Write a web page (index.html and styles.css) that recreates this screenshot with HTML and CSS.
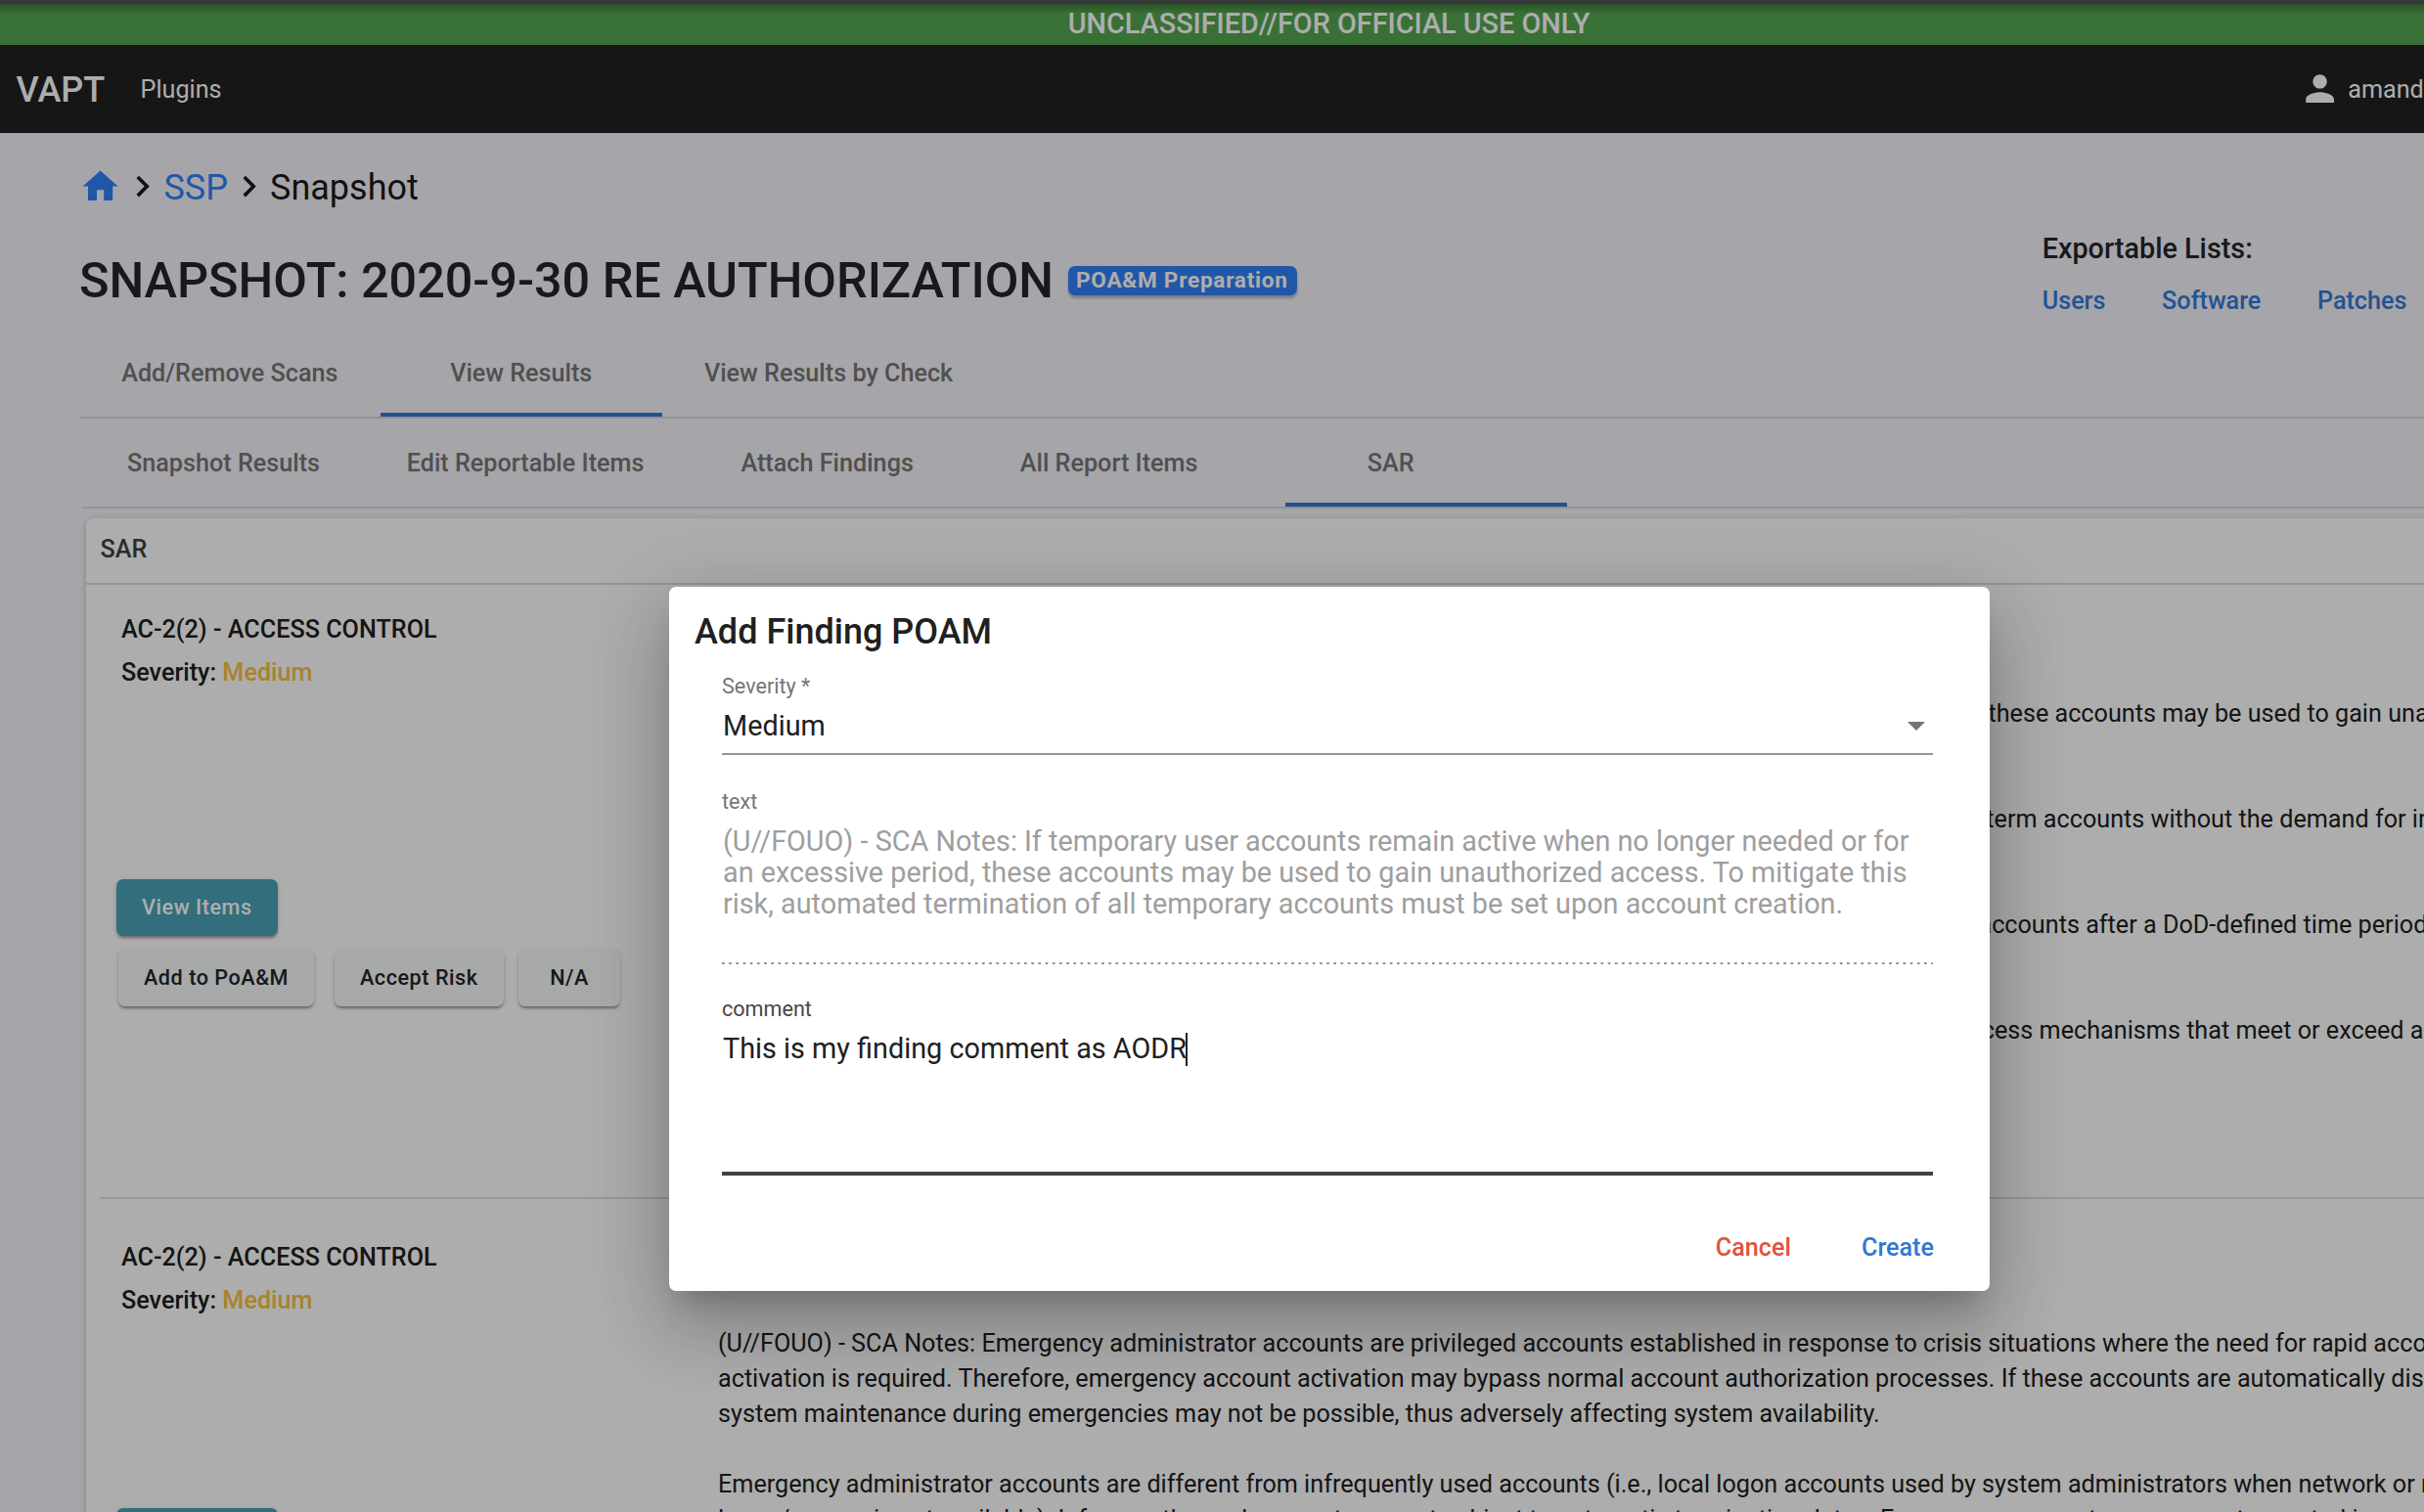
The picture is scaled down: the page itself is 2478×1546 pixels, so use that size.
FILE: index.html
```html
<!DOCTYPE html>
<html lang="en">
<head>
<meta charset="utf-8">
<title>VAPT - Snapshot</title>
<link rel="stylesheet" href="styles.css">
</head>
<body>
<div class="app">
  <div class="banner">UNCLASSIFIED//FOR OFFICIAL USE ONLY</div>
  <nav class="navbar">
    <span class="brand">VAPT</span>
    <a class="nav-link">Plugins</a>
    <div class="user">
      <svg class="icon" viewBox="0 0 24 24"><path d="M12 12c2.21 0 4-1.79 4-4s-1.79-4-4-4-4 1.790-4 4 1.790 4 4 4zm0 2c-2.670 0-8 1.340-8 4v2h16v-2c0-2.660-5.330-4-8-4z"/></svg>
      <span>amanda</span>
    </div>
  </nav>

  <main class="content">
    <div class="breadcrumb">
      <svg class="icon crumb-link" viewBox="0 0 24 24"><path d="M10 20v-6h4v6h5v-8h3L12 3 2 12h3v8z"/></svg>
      <svg class="icon" viewBox="0 0 24 24"><path d="M10 6L8.590 7.410 13.170 12l-4.580 4.590L10 18l6-6z"/></svg>
      <a class="crumb-link">SSP</a>
      <svg class="icon" viewBox="0 0 24 24"><path d="M10 6L8.590 7.410 13.170 12l-4.580 4.590L10 18l6-6z"/></svg>
      <span>Snapshot</span>
    </div>

    <header class="page-head">
      <div class="title-row">
        <h1>SNAPSHOT: 2020-9-30 RE AUTHORIZATION</h1>
        <span class="badge">POA&amp;M Preparation</span>
      </div>
      <div class="exports">
        <h2>Exportable Lists:</h2>
        <div class="export-links"><a>Users</a><a>Software</a><a>Patches</a></div>
      </div>
    </header>

    <div class="tabs">
      <div class="tab">Add/Remove Scans</div>
      <div class="tab active">View Results</div>
      <div class="tab">View Results by Check</div>
    </div>
    <div class="tabs sub-tabs">
      <div class="tab">Snapshot Results</div>
      <div class="tab">Edit Reportable Items</div>
      <div class="tab">Attach Findings</div>
      <div class="tab">All Report Items</div>
      <div class="tab active shifted">SAR</div>
    </div>

    <section class="card">
      <div class="card-head">SAR</div>
      <article class="finding">
        <div class="finding-side">
          <div class="control">AC-2(2) - ACCESS CONTROL</div>
          <div class="severity">Severity: <span class="medium">Medium</span></div>
          <div class="actions">
            <div class="action-row"><button class="btn btn-info">View Items</button></div>
            <div class="action-row sub"><button class="btn">Add to PoA&amp;M</button><button class="btn accept">Accept Risk</button><button class="btn na">N/A</button></div>
          </div>
        </div>
        <div class="finding-text">(U//FOUO) - SCA Notes: If temporary user accounts remain active when no longer needed or for an excessive period, these accounts may be used to gain unauthorized
access. To mitigate this risk, automated termination of all temporary accounts must be set upon account creation.

Temporary accounts are established as part of normal account activation procedures when there is a need for short-term accounts without the demand for immediacy
in account activation.

If temporary accounts are used, the operating system must be configured to automatically terminate these types of accounts after a DoD-defined time period of
72 hours.

To address access requirements, many operating systems may be integrated with enterprise-level authentication/access mechanisms that meet or exceed access
control policy requirements.</div>
      </article>
      <article class="finding">
        <div class="finding-side">
          <div class="control">AC-2(2) - ACCESS CONTROL</div>
          <div class="severity">Severity: <span class="medium">Medium</span></div>
          <div class="actions">
            <div class="action-row"><button class="btn btn-info">View Items</button></div>
          </div>
        </div>
        <div class="finding-text">(U//FOUO) - SCA Notes: Emergency administrator accounts are privileged accounts established in response to crisis situations where the need for rapid account
activation is required. Therefore, emergency account activation may bypass normal account authorization processes. If these accounts are automatically disabled,
system maintenance during emergencies may not be possible, thus adversely affecting system availability.

Emergency administrator accounts are different from infrequently used accounts (i.e., local logon accounts used by system administrators when network or normal
logon/access is not available). Infrequently used accounts are not subject to automatic termination dates. Emergency accounts are accounts created in response</div>
      </article>
    </section>
  </main>

  <div class="backdrop">
    <div class="dialog">
      <h2 class="dialog-title">Add Finding POAM</h2>
      <div class="field select">
        <div class="label">Severity *</div>
        <div class="value">Medium<svg class="arrow" viewBox="0 0 10 5"><path d="M0 0h10L5 5z"/></svg></div>
      </div>
      <div class="field disabled">
        <div class="label">text</div>
        <div class="value">(U//FOUO) - SCA Notes: If temporary user accounts remain active when no longer needed or for
an excessive period, these accounts may be used to gain unauthorized access. To mitigate this
risk, automated termination of all temporary accounts must be set upon account creation.</div>
      </div>
      <div class="field focused">
        <div class="label">comment</div>
        <div class="value">This is my finding comment as AODR<span class="caret"></span></div>
      </div>
      <div class="dialog-actions"><a class="cancel">Cancel</a><a class="create">Create</a></div>
    </div>
  </div>
  <div class="browser-edge"></div>
</div>
</body>
</html>
```
FILE: styles.css
```css
* { box-sizing: border-box; }

body {
  margin: 0;
  height: 1546px;
  overflow: hidden;
  font-family: Roboto, "Liberation Sans", sans-serif;
  font-size: 25.2px;
  line-height: 36px;
  color: #202020;
}

h1, h2 { margin: 0; font-weight: 500; }

/* The app is laid out wider than the window and runs off its right side. */
.app {
  position: relative;
  width: 2718px;
  height: 1546px;
  overflow: hidden;
  background: #f5f4fa;
}

.icon { width: 43.2px; height: 43.2px; fill: currentColor; flex: none; }

.banner {
  display: flex;
  justify-content: center;
  align-items: center;
  height: 46px;
  padding: 1px 1px 0 0;
  background: #54a550;
  color: #fff;
  font-size: 28.8px;
  font-weight: 500;
}

.navbar {
  display: flex;
  align-items: center;
  height: 90px;
  padding-left: 16.5px;
  background: #212121;
  color: #fff;
}
.brand { width: 127px; padding-top: 1px; font-size: 36px; font-weight: 500; }
.nav-link { width: 82px; }
.user { display: flex; align-items: center; gap: 7px; margin-left: 2124.5px; }
.nav-link, .user span { padding-top: 2px; }

.content { padding: 33px 0 0 81px; }

.breadcrumb {
  display: flex;
  align-items: center;
  height: 44px;
  font-size: 36px;
  color: #1a1a1a;
}
.breadcrumb a, .breadcrumb span { padding-top: 2px; }
.crumb-link { color: #3080f8; }

.page-head { display: flex; height: 127px; }
.title-row { display: flex; align-items: flex-start; width: 2006.7px; padding-top: 44px; }
h1 {
  color: #24262c;
  font-size: 50.4px;
  letter-spacing: -.06px;
  line-height: 60px;
  white-space: nowrap;
}
.badge {
  width: 234px;
  height: 30px;
  margin: 15px 0 0 15px;
  padding-left: 8px;
  border-radius: 7px;
  background: #3080f8;
  color: #fff;
  font-size: 22.6px;
  font-weight: 700;
  letter-spacing: .75px;
  line-height: 29px;
  white-space: nowrap;
  box-shadow: 0 3px 3px rgba(0, 0, 0, .25);
}
.exports { padding-top: 23px; }
.exports h2 { color: #24262c; font-size: 28.8px; }
.export-links {
  display: flex;
  gap: 57.6px;
  margin-top: 18px;
  color: #347bd8;
  font-weight: 500;
}

.tabs {
  display: flex;
  height: 88px;
  border-bottom: 2px solid #d8d8db;
  color: #777;
  font-weight: 500;
}
.tab {
  position: relative;
  display: flex;
  align-items: center;
  justify-content: center;
  min-width: 288px;
  padding: 0 43.2px 2px;
  white-space: nowrap;
}
.tab.active::after {
  content: "";
  position: absolute;
  left: 0;
  bottom: 0;
  width: 100%;
  height: 4px;
  background: #3178d2;
}
.tab.shifted::after { left: 36px; }
.sub-tabs { margin: 4px 0 0 3.5px; }

.card {
  margin: 10px 0 0 7px;
  border-radius: 7px 0 0 0;
  background: #fff;
  box-shadow: 0 2px 6px rgba(40, 40, 90, .28);
}
.card-head {
  height: 68px;
  padding: 14px 0 0 14.5px;
  border-bottom: 2px solid #dedede;
  color: #404040;
  font-weight: 500;
}

.finding {
  display: flex;
  height: 642px;
  margin-left: 14px;
  border-bottom: 2px solid #dedee6;
}
.card-head + .finding { height: 628px; }
.card-head + .finding > div { margin-top: -15px; }
.finding-side { width: 632px; padding: 43px 0 0 22px; }
.finding + .finding .finding-side { padding-top: 42px; }
.finding + .finding .actions { margin-top: 194px; }
.control, .severity { font-weight: 500; }
.severity { margin-top: 8px; }
.medium { color: #f8c240; }
.actions { margin: 193px 0 0 -5px; }
.action-row { display: flex; margin-bottom: 14px; }
.action-row.sub { margin-left: 2px; }
.btn {
  height: 58px;
  padding: 0 26px;
  border: 0;
  border-radius: 7px;
  background: #f8f9fa;
  color: #212529;
  font: 500 21.6px/54px Roboto, sans-serif;
  letter-spacing: .54px;
  white-space: nowrap;
  box-shadow: 0 3px 3px -1px rgba(0, 0, 0, .35), 0 1px 5px rgba(0, 0, 0, .14);
}
.btn-info { background: #4aa2b6; color: #fff; }
.btn.accept { margin-left: 21px; }
.btn.na { min-width: 104px; margin-left: 15.5px; }
.finding-text { padding-top: 129px; white-space: pre; }
.finding + .finding .finding-text { padding-top: 130px; }

/* Modal */
.backdrop {
  position: absolute;
  inset: 0;
  display: flex;
  justify-content: center;
  padding-top: 600px;
  background: rgba(0, 0, 0, .32);
}
.dialog {
  width: 1350px;
  height: 720px;
  padding: 28px 58px 0 54px;
  border-radius: 7.2px;
  background: #fff;
  box-shadow:
    0 20px 27px -13px rgba(0, 0, 0, .2),
    0 43px 68px 5px rgba(0, 0, 0, .14),
    0 16px 83px 14px rgba(0, 0, 0, .12);
}
.dialog-title { margin-left: -28px; font-size: 36px; }
.label { color: #757575; font-size: 21.6px; line-height: 28px; }
.value { padding-left: 1px; font-size: 28.8px; line-height: 32.4px; white-space: pre; }
.select { height: 84px; margin: 24px 0 34px; border-bottom: 2px solid #949494; }
.select .value {
  display: flex;
  align-items: center;
  justify-content: space-between;
  margin-top: 10px;
}
.arrow { width: 18px; height: 9px; margin-right: 8px; fill: #757575; }
.disabled {
  height: 180px;
  background: linear-gradient(to right, #949494 0, #949494 33%, transparent 0) 0 100% / 7.2px 2px repeat-x;
}
.disabled .value { margin-top: 9.5px; color: #9e9e9e; }
.focused { height: 184px; margin-top: 32px; border-bottom: 4px solid #424242; }
.focused .label { color: #474747; }
.focused .value { display: flex; margin-top: 10px; }
.caret { width: 2px; height: 34px; margin-left: -1px; background: #222; }
.dialog-actions {
  display: flex;
  justify-content: flex-end;
  gap: 72px;
  margin: 56px -1px 0 0;
  font-weight: 500;
}
.cancel { color: #e25241; }
.create { color: #3178d2; }

/* Lower edge of the browser toolbar and the shadow below it */
.browser-edge {
  position: absolute;
  inset: 0 0 auto;
  height: 14px;
  background: linear-gradient(#35363a 0 4px, rgba(0, 0, 0, .28) 4px, transparent);
}
```
